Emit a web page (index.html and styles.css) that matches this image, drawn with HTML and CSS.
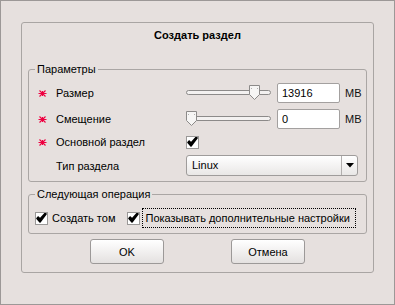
FILE: index.html
```html
<!DOCTYPE html>
<html lang="ru">
<head>
  <meta charset="UTF-8">
  <title>Создать раздел</title>
  <link rel="stylesheet" href="styles.css">
</head>
<body>
  <div class="window">
    <div class="panel">
      <div class="title">Создать раздел</div>

      <fieldset class="group">
        <legend>Параметры</legend>
        <div class="params">
          <span class="star"><svg width="9" height="9" viewBox="0 0 9 9"><path d="M0.5 4.5h8M1.5 1.5l6 6M7.5 1.5l-6 6M4.5 2v5" stroke="#ee0040" stroke-width="1.1"/></svg></span>
          <span class="label">Размер</span>
          <span class="slider">
            <svg width="85" height="16" viewBox="0 0 85 16">
              <rect x="0.5" y="5.5" width="84" height="4" rx="2" fill="#f3f1f0" stroke="#8c8a89"/>
              <path d="M63.5 0.5h10v9l-5 5l-5-5z" fill="#f6f5f4" stroke="#8c8a89"/>
              <path d="M65.5 3v1M71.5 3v1" stroke="#b0aead"/>
            </svg>
          </span>
          <input class="field" type="text" value="13916">
          <span class="unit">MB</span>

          <span class="star"><svg width="9" height="9" viewBox="0 0 9 9"><path d="M0.5 4.5h8M1.5 1.5l6 6M7.5 1.5l-6 6M4.5 2v5" stroke="#ee0040" stroke-width="1.1"/></svg></span>
          <span class="label">Смещение</span>
          <span class="slider">
            <svg width="85" height="16" viewBox="0 0 85 16">
              <rect x="0.5" y="5.5" width="84" height="4" rx="2" fill="#f3f1f0" stroke="#8c8a89"/>
              <path d="M0.5 0.5h10v9l-5 5l-5-5z" fill="#f6f5f4" stroke="#8c8a89"/>
              <path d="M2.5 3v1M8.5 3v1" stroke="#b0aead"/>
            </svg>
          </span>
          <input class="field" type="text" value="0">
          <span class="unit">MB</span>

          <span class="star"><svg width="9" height="9" viewBox="0 0 9 9"><path d="M0.5 4.5h8M1.5 1.5l6 6M7.5 1.5l-6 6M4.5 2v5" stroke="#ee0040" stroke-width="1.1"/></svg></span>
          <span class="label">Основной раздел</span>
          <span class="wide">
            <span class="check"><svg width="11" height="11" viewBox="0 0 11 11"><path d="M1 5.5l3 3.5l6-8l-1-0.5l-5 5.5l-1.8-2z" fill="#000" stroke="#000" stroke-width="1.6" stroke-linejoin="round"/></svg></span>
          </span>

          <span class="star"></span>
          <span class="label">Тип раздела</span>
          <span class="wide">
            <span class="select">
              <span class="select-text">Linux</span>
              <span class="select-arrow"><svg width="8" height="5" viewBox="0 0 8 5"><path d="M0 0h8l-4 4.5z" fill="#000"/></svg></span>
            </span>
          </span>
        </div>
      </fieldset>

      <fieldset class="group next">
        <legend>Следующая операция</legend>
        <div class="options">
          <span class="check"><svg width="11" height="11" viewBox="0 0 11 11"><path d="M1 5.5l3 3.5l6-8l-1-0.5l-5 5.5l-1.8-2z" fill="#000" stroke="#000" stroke-width="1.6" stroke-linejoin="round"/></svg></span>
          <span class="opt">Создать том</span>
          <span class="check second"><svg width="11" height="11" viewBox="0 0 11 11"><path d="M1 5.5l3 3.5l6-8l-1-0.5l-5 5.5l-1.8-2z" fill="#000" stroke="#000" stroke-width="1.6" stroke-linejoin="round"/></svg></span>
          <span class="opt focus">Показывать дополнительные настройки</span>
        </div>
      </fieldset>

      <div class="buttons">
        <button class="btn">OK</button>
        <button class="btn">Отмена</button>
      </div>
    </div>
  </div>
</body>
</html>
```

FILE: styles.css
```css
html, body {
  margin: 0;
  padding: 0;
  background: #e6e0de;
}
body {
  font-family: "Liberation Sans", Arial, sans-serif;
  font-size: 11px;
  color: #000;
}
.window {
  box-sizing: border-box;
  width: 395px;
  height: 305px;
  border: 1px solid #9c9897;
  padding: 21px 20px 0 20px;
}
.panel {
  box-sizing: border-box;
  height: 251px;
  border: 1px solid #a9a5a3;
  border-radius: 3px;
  padding: 0 6px;
}
.title {
  margin-top: 6px;
  line-height: 13px;
  text-align: center;
  font-weight: bold;
}
/* Group boxes */
.group {
  margin: 21px 0 0 0;
  padding: 7px 0 5px 0;
  border: 1px solid #aaa6a4;
  border-radius: 3px;
  min-width: 0;
}
.group legend {
  margin-left: 6px;
  padding: 0 2px;
  line-height: 13px;
}
.next {
  margin-top: 6px;
}
.params {
  display: grid;
  grid-template-columns: 27px 130px 91px 68px auto;
  grid-template-rows: 20px 20px 14px 21px;
  row-gap: 6px;
  align-items: center;
}
.star {
  display: flex;
  justify-content: flex-end;
  padding-right: 9px;
}
.star svg {
  display: block;
}
.slider svg {
  display: block;
}
.field {
  box-sizing: border-box;
  width: 63px;
  height: 20px;
  margin: 0;
  padding: 0 4px;
  border: 1px solid #a3a09f;
  border-radius: 2px;
  background: #fff;
  font-family: inherit;
  font-size: 11px;
  color: #000;
}
.unit {
  color: #111;
}
.wide {
  grid-column: 3 / 6;
  display: flex;
  align-items: center;
}
.check {
  box-sizing: border-box;
  display: inline-flex;
  align-items: center;
  justify-content: center;
  width: 13px;
  height: 13px;
  border: 1px solid #9a9897;
  background: #fff;
  flex-shrink: 0;
}
.check svg {
  display: block;
}
.select {
  box-sizing: border-box;
  display: flex;
  width: 172px;
  height: 21px;
  border: 1px solid #9f9c9b;
  border-radius: 3px;
  background: linear-gradient(#ffffff, #e9e7e6);
}
.select-text {
  flex: 1;
  line-height: 19px;
  padding-left: 5px;
}
.select-arrow {
  width: 15px;
  border-left: 1px solid #b2afae;
  display: flex;
  align-items: center;
  justify-content: center;
}
.select-arrow svg {
  display: block;
}
.options {
  display: flex;
  align-items: center;
  height: 20px;
  padding-left: 6px;
  white-space: nowrap;
}
.opt {
  margin-left: 4px;
}
.second {
  margin-left: 12px;
}
.focus {
  margin-left: 2px;
  padding: 0 5px 0 2px;
  line-height: 18px;
  border: 1px dotted #000;
}
.buttons {
  display: flex;
  justify-content: center;
  gap: 67px;
  margin-top: 5px;
}
.btn {
  box-sizing: border-box;
  width: 74px;
  height: 25px;
  margin: 0;
  padding: 0;
  border: 1px solid #9c9998;
  border-radius: 3px;
  background: linear-gradient(#ffffff, #e4e1e0);
  font-family: inherit;
  font-size: 11px;
  color: #000;
}
```
